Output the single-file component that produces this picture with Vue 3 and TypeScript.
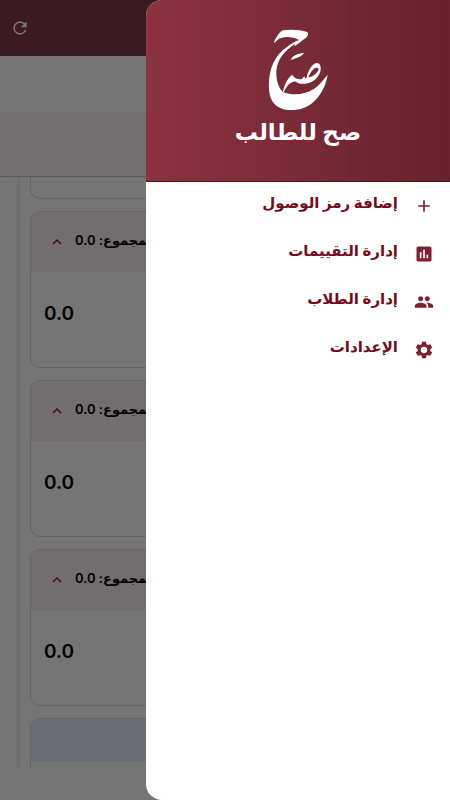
<script setup lang="ts">
interface MenuItem {
  label: string
  icon: string
}

const menu: MenuItem[] = [
  { label: 'إضافة رمز الوصول', icon: 'M19 13h-6v6h-2v-6H5v-2h6V5h2v6h6v2z' },
  {
    label: 'إدارة التقييمات',
    icon: 'M19 3H5c-1.1 0-2 .9-2 2v14c0 1.1.9 2 2 2h14c1.1 0 2-.9 2-2V5c0-1.1-.9-2-2-2zM9 17H7v-7h2v7zm4 0h-2V7h2v10zm4 0h-2v-4h2v4z',
  },
  {
    label: 'إدارة الطلاب',
    icon: 'M16 11c1.66 0 2.99-1.34 2.99-3S17.66 5 16 5c-1.66 0-3 1.34-3 3s1.34 3 3 3zm-8 0c1.66 0 2.99-1.34 2.99-3S9.66 5 8 5C6.34 5 5 6.34 5 8s1.34 3 3 3zm0 2c-2.33 0-7 1.17-7 3.5V19h14v-2.5c0-2.33-4.67-3.5-7-3.5zm8 0c-.29 0-.62.02-.97.05 1.16.84 1.97 1.97 1.97 3.45V19h6v-2.5c0-2.33-4.67-3.5-7-3.5z',
  },
  {
    label: 'الإعدادات',
    icon: 'M19.43 12.98c.04-.32.07-.64.07-.98s-.03-.66-.07-.98l2.11-1.65c.19-.15.24-.42.12-.64l-2-3.46c-.12-.22-.39-.3-.61-.22l-2.49 1c-.52-.4-1.08-.73-1.69-.98l-.38-2.65C14.46 2.18 14.25 2 14 2h-4c-.25 0-.46.18-.49.42l-.38 2.65c-.61.25-1.17.59-1.69.98l-2.49-1c-.23-.09-.49 0-.61.22l-2 3.46c-.13.22-.07.49.12.64l2.11 1.65c-.04.32-.07.65-.07.98s.03.66.07.98l-2.11 1.65c-.19.15-.24.42-.12.64l2 3.46c.12.22.39.3.61.22l2.49-1c.52.4 1.08.73 1.69.98l.38 2.65c.03.24.24.42.49.42h4c.25 0 .46-.18.49-.42l.38-2.65c.61-.25 1.17-.59 1.69-.98l2.49 1c.23.09.49 0 .61-.22l2-3.46c.12-.22.07-.49-.12-.64l-2.11-1.65zM12 15.8a3.8 3.8 0 1 1 0-7.6 3.8 3.8 0 0 1 0 7.6z',
  },
]

const totals: string[] = ['0.0', '0.0', '0.0']
</script>

<template>
  <div class="screen" dir="rtl">
    <div class="page">
      <header class="app-bar">
        <button class="refresh" type="button" aria-label="تحديث">
          <svg viewBox="0 0 24 24" width="20" height="20" fill="currentColor">
            <path d="M17.65 6.35A7.95 7.95 0 0 0 12 4a8 8 0 1 0 7.73 10h-2.08A6 6 0 1 1 12 6c1.66 0 3.14.69 4.22 1.78L13 11h7V4l-2.35 2.35z" />
          </svg>
        </button>
      </header>
      <section class="summary"></section>
      <main class="content">
        <div class="list">
          <article class="card card-tail"></article>
          <article v-for="(total, i) in totals" :key="i" class="card">
            <div class="card-head">
              <span class="total">المجموع: {{ total }}</span>
              <button class="toggle" type="button" aria-label="طي">
                <svg viewBox="0 0 24 24" width="18" height="18" fill="currentColor">
                  <path d="M12 8l-6 6 1.41 1.41L12 10.83l4.59 4.58L18 14z" />
                </svg>
              </button>
            </div>
            <div class="card-body">{{ total }}</div>
          </article>
          <article class="card card-next">
            <div class="next-head"></div>
          </article>
        </div>
      </main>
    </div>
    <div class="scrim"></div>
    <aside class="drawer">
      <div class="brand">
        <svg class="logo" viewBox="0 0 228 288" width="76" height="96" fill="#fff">
          <path d="M41 70C48 51 58 36 69 31C89 28 122 29 141 36C147 40 144 48 138 53L106 77C102 78 103 75 105 72C108 66 113 63 116 59C101 52 82 49 66 53C55 55 49 63 41 70Z" />
          <path d="M105 72C75 91 51 118 49 154C48 181 56 205 69 216C98 228 133 224 160 208C180 195 189 179 203 164C199 190 188 216 169 237C148 263 116 272 83 270C47 266 29 244 27 208C25 165 34 122 68 91C79 81 95 70 110 62L120 66Z" />
          <path d="M92 120C97 107 111 101 132 98C126 109 111 114 92 120Z" />
          <path fill-rule="evenodd" d="M69 216C72 196 82 177 94 166C98 164 101 168 103 172C111 179 119 178 126 177C130 174 131 169 134 169L135 176L140 173C144 152 155 134 168 129C179 127 183 136 182 150C178 171 160 187 142 190C129 193 117 192 108 185C93 182 78 200 72 216ZM145 172C159 171 173 159 176 148C172 137 156 146 145 172Z" />
        </svg>
        <h1 class="brand-name">صح للطالب</h1>
      </div>
      <nav class="menu">
        <a v-for="item in menu" :key="item.label" class="menu-item" href="#">
          <svg viewBox="0 0 24 24" width="20" height="20" fill="currentColor">
            <path :d="item.icon" />
          </svg>
          <span class="menu-label">{{ item.label }}</span>
        </a>
      </nav>
    </aside>
  </div>
</template>

<style>
body {
  margin: 0;
}
</style>

<style scoped>
.screen {
  position: relative;
  height: 100vh;
  overflow: hidden;
  background: #fff;
  font-family: Inter, 'DejaVu Sans', sans-serif;
}
.page {
  display: flex;
  flex-direction: column;
  height: 100%;
  box-sizing: border-box;
  padding-bottom: 32px;
}
.app-bar {
  display: flex;
  flex: none;
  justify-content: flex-end;
  align-items: center;
  height: 56px;
  padding: 0 10px;
  background: #823a50;
  color: #fff;
}
button {
  display: flex;
  padding: 0;
  border: 0;
  background: none;
  color: inherit;
}
.summary {
  flex: none;
  height: 120px;
  border-bottom: 1px solid #d3c0c5;
  background: linear-gradient(#fff 56px, #f8f3f4 56px);
}
.content {
  flex: 1;
  min-height: 0;
  padding: 0 19px;
  overflow: hidden;
}
.list {
  display: flex;
  flex-direction: column;
  gap: 12px;
  height: 100%;
  padding: 0 10px;
  border: solid #e6e6e6;
  border-width: 0 1px;
  box-shadow: 0 0 5px #ddd;
}
.card {
  flex: none;
  box-sizing: border-box;
  height: 157px;
  overflow: hidden;
  border: 1px solid #dcdcdc;
  border-radius: 10px;
}
.card-tail {
  height: 22px;
  border-top: 0;
  border-radius: 0 0 10px 10px;
}
.card-head {
  display: flex;
  align-items: center;
  justify-content: flex-end;
  gap: 9px;
  height: 60px;
  padding: 0 17px;
  background: #f8eff1;
}
.total {
  padding-bottom: 4px;
  font-size: 13px;
  font-weight: 600;
  line-height: 20px;
}
.toggle {
  color: #8a1538;
}
.card-body {
  display: flex;
  align-items: center;
  justify-content: flex-end;
  height: 82px;
  padding: 0 13px;
  font-size: 19px;
  font-weight: 600;
}
.next-head {
  height: 43px;
  background: #e6f0fc;
}
.scrim {
  position: absolute;
  inset: 0;
  background: rgba(0, 0, 0, 0.54);
}
.drawer {
  position: absolute;
  inset: 0 0 0 auto;
  width: 304px;
  max-width: 85%;
  overflow: hidden;
  border-radius: 16px 0 0 16px;
  background: #fff;
}
.brand {
  display: flex;
  flex-direction: column;
  align-items: center;
  box-sizing: border-box;
  height: 182px;
  padding-top: 20px;
  border-bottom: 1px solid #6b0712;
  background: linear-gradient(90deg, #8c3241, #65222d);
}
.brand-name {
  margin: 0;
  color: #fff;
  font-size: 23px;
  font-weight: 700;
  line-height: 32px;
}
.menu {
  display: flex;
  flex-direction: column;
}
.menu-item {
  display: flex;
  align-items: center;
  gap: 16px;
  height: 48px;
  padding: 0 16px;
  color: #822033;
  text-decoration: none;
}
.menu-label {
  padding-bottom: 6px;
  color: #780c1c;
  font-size: 15px;
  font-weight: 700;
  line-height: 20px;
}
</style>
